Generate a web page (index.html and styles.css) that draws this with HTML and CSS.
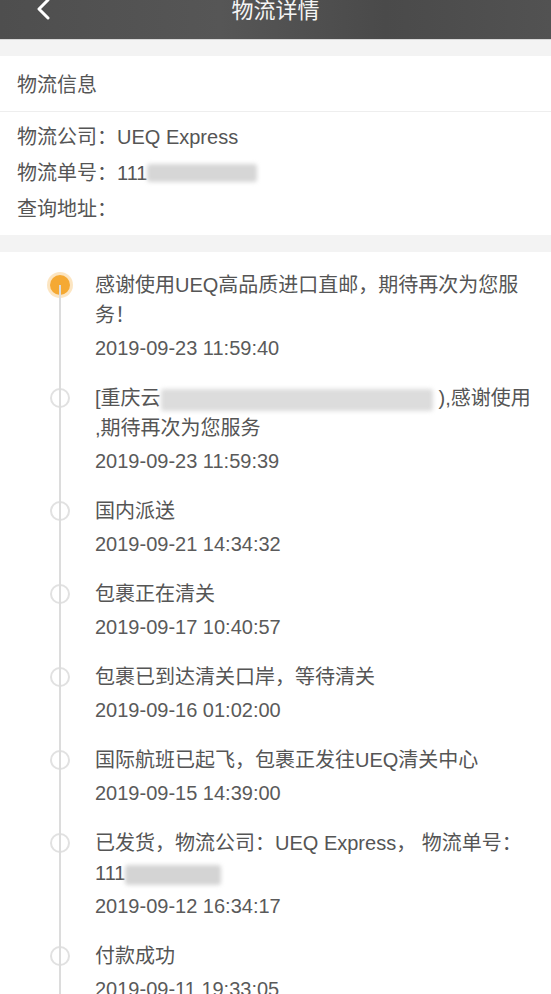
FILE: index.html
```html
<!DOCTYPE html>
<html lang="zh">
<head>
<meta charset="utf-8">
<title>物流详情</title>
<link rel="stylesheet" href="styles.css">
</head>
<body>
<header class="topbar">
  <svg class="back" width="20" height="26" viewBox="0 0 20 26"><path d="M14 2 L5 11 L14 20" fill="none" stroke="#fff" stroke-width="3" stroke-linecap="round" stroke-linejoin="round"/></svg>
  <div class="title">物流详情</div>
</header>
<div class="gap"></div>
<section class="info">
  <div class="info-head">物流信息</div>
  <div class="info-body">
    <div class="row">物流公司：UEQ Express</div>
    <div class="row">物流单号：111<span class="blur blur-a"></span></div>
    <div class="row">查询地址：</div>
  </div>
</section>
<div class="gap gap2"></div>
<section class="timeline">
  <div class="item">
    <div class="marker"><span class="dot active"></span></div>
    <div class="content">
      <div class="text">感谢使用UEQ高品质进口直邮，期待再次为您服<br>务！</div>
      <div class="time">2019-09-23 11:59:40</div>
    </div>
  </div>
  <div class="item">
    <div class="marker"><span class="dot"></span></div>
    <div class="content">
      <div class="text nowrap">[重庆云<span class="blur blur-b"></span>),感谢使用<br>,期待再次为您服务</div>
      <div class="time">2019-09-23 11:59:39</div>
    </div>
  </div>
  <div class="item">
    <div class="marker"><span class="dot"></span></div>
    <div class="content">
      <div class="text">国内派送</div>
      <div class="time">2019-09-21 14:34:32</div>
    </div>
  </div>
  <div class="item">
    <div class="marker"><span class="dot"></span></div>
    <div class="content">
      <div class="text">包裹正在清关</div>
      <div class="time">2019-09-17 10:40:57</div>
    </div>
  </div>
  <div class="item">
    <div class="marker"><span class="dot"></span></div>
    <div class="content">
      <div class="text">包裹已到达清关口岸，等待清关</div>
      <div class="time">2019-09-16 01:02:00</div>
    </div>
  </div>
  <div class="item">
    <div class="marker"><span class="dot"></span></div>
    <div class="content">
      <div class="text">国际航班已起飞，包裹正发往UEQ清关中心</div>
      <div class="time">2019-09-15 14:39:00</div>
    </div>
  </div>
  <div class="item">
    <div class="marker"><span class="dot"></span></div>
    <div class="content">
      <div class="text nowrap">已发货，物流公司：UEQ Express， 物流单号：<br>111<span class="blur blur-c"></span></div>
      <div class="time">2019-09-12 16:34:17</div>
    </div>
  </div>
  <div class="item">
    <div class="marker"><span class="dot"></span></div>
    <div class="content">
      <div class="text">付款成功</div>
      <div class="time">2019-09-11 19:33:05</div>
    </div>
  </div>
</section>
</body>
</html>
```
FILE: styles.css
```css
* { box-sizing: border-box; }
html, body { margin: 0; padding: 0; }
body {
  background: #fff;
  font-family: "Liberation Sans", "Noto Sans CJK SC", sans-serif;
  color: #555;
  font-size: 20px;
  width: 551px;
  height: 994px;
  overflow: hidden;
}
.topbar {
  height: 40px;
  background: linear-gradient(90deg, #4e4e4e, #565656 40%, #4a4a4a 70%, #525252);
  display: flex;
  align-items: flex-start;
  border-bottom: 1px solid #d8d8d8;
}
.back {
  margin-left: 34px;
  margin-top: -2px;
}
.title {
  flex: 1;
  text-align: center;
  color: #f4f4f4;
  font-size: 22px;
  line-height: 22px;
  margin-right: 54px;
}
.gap {
  height: 16px;
  background: #f3f3f3;
}
.gap2 { height: 17px; }
.info-head {
  height: 56px;
  line-height: 58px;
  padding-left: 17px;
  border-bottom: 1px solid #eee;
}
.info-body {
  padding: 7px 17px 8px;
}
.row {
  line-height: 36px;
  height: 36px;
  white-space: nowrap;
}
.blur {
  display: inline-block;
  background: #d6d6d6;
  filter: blur(2px);
  vertical-align: middle;
  height: 18px;
  border-radius: 3px;
}
.blur-a { width: 110px; margin-top: -3px; }
.blur-b { width: 272px; height: 22px; background: #dcdcdc; margin-right: 6px; }
.blur-c { width: 96px; height: 20px; background: #d4d4d4; }
.timeline {
  position: relative;
  padding-top: 18px;
}
.timeline::before {
  content: "";
  position: absolute;
  left: 59px;
  top: 33px;
  bottom: 0;
  width: 1.5px;
  background: #dcdcdc;
}
.item {
  display: flex;
  padding-bottom: 20px;
}
.marker {
  width: 95px;
  flex: none;
  padding-left: 50px;
}
.dot {
  display: block;
  width: 20px;
  height: 20px;
  margin-top: 5px;
  border-radius: 50%;
  background: #fff;
  border: 2px solid #e1e1e1;
}
.dot.active {
  background: #f5a933;
  border: none;
  box-shadow: 0 0 0 3px rgba(245, 169, 51, 0.3);
}
.content {
  flex: 1;
  padding-right: 8px;
}
.text {
  line-height: 30px;
}
.nowrap { white-space: nowrap; }
.time {
  line-height: 30px;
  margin-top: 3px;
  color: #5a5a5a;
}
```
